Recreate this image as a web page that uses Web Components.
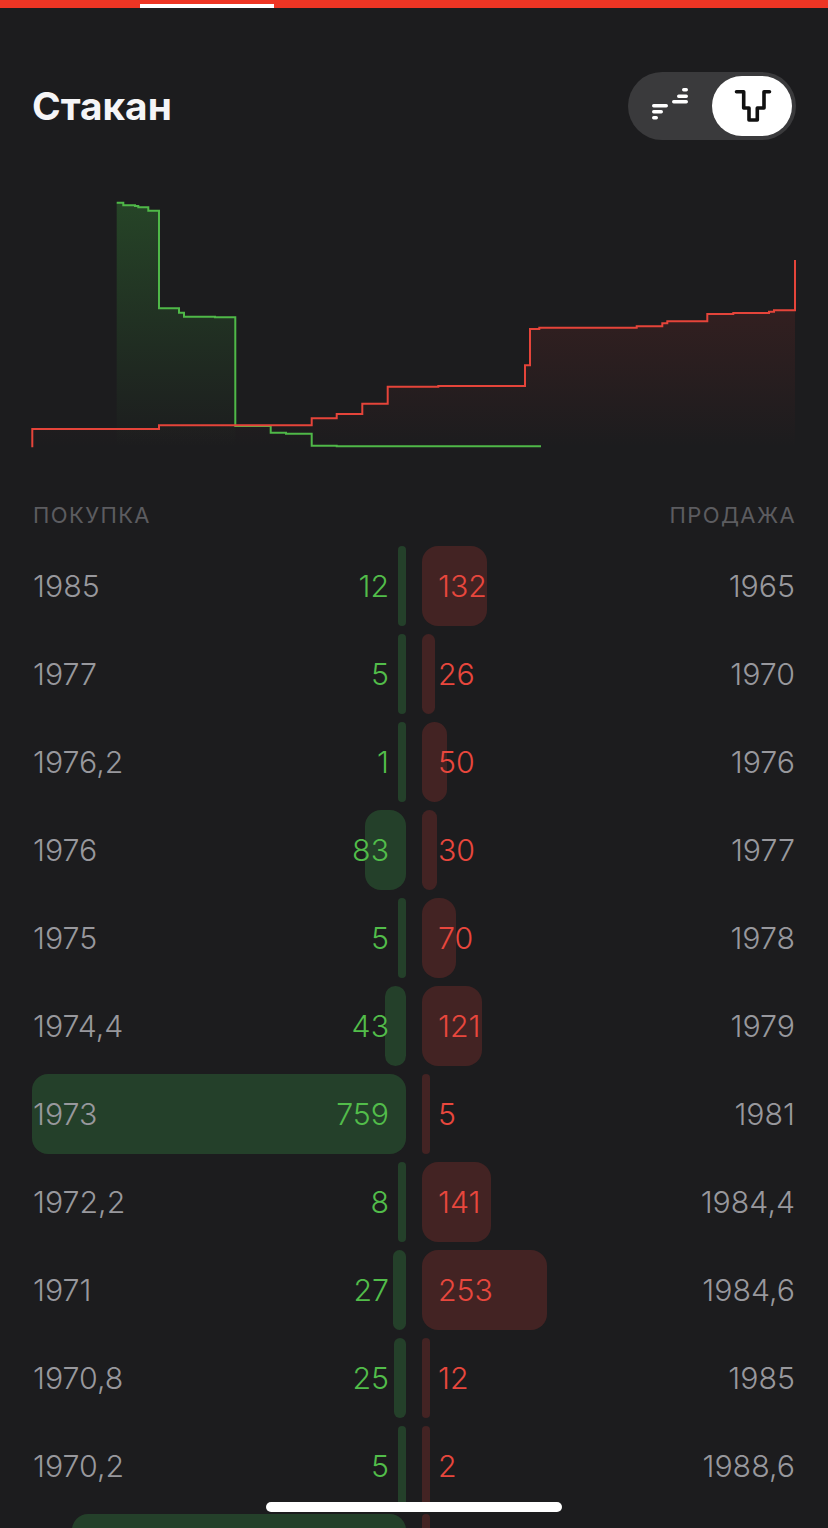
<!DOCTYPE html>
<html lang="ru"><head><meta charset="utf-8"><title>Стакан</title>
<style>
html,body{margin:0;height:1528px;overflow:hidden;background:#1c1c1e;font-family:Inter,"Noto Sans",sans-serif}
</style></head><body>
<order-screen>
  <top-bar></top-bar>
  <book-header>Стакан</book-header>
  <depth-chart></depth-chart>
  <book-labels></book-labels>
  <book-row bp="1985" bq="12" bw="8" ap="1965" aq="132" aw="65"></book-row>
  <book-row bp="1977" bq="5" bw="8" ap="1970" aq="26" aw="13"></book-row>
  <book-row bp="1976,2" bq="1" bw="8" ap="1976" aq="50" aw="25"></book-row>
  <book-row bp="1976" bq="83" bw="41" ap="1977" aq="30" aw="15"></book-row>
  <book-row bp="1975" bq="5" bw="8" ap="1978" aq="70" aw="34"></book-row>
  <book-row bp="1974,4" bq="43" bw="21" ap="1979" aq="121" aw="60"></book-row>
  <book-row bp="1973" bq="759" bw="374" ap="1981" aq="5" aw="8"></book-row>
  <book-row bp="1972,2" bq="8" bw="8" ap="1984,4" aq="141" aw="69"></book-row>
  <book-row bp="1971" bq="27" bw="13" ap="1984,6" aq="253" aw="125"></book-row>
  <book-row bp="1970,8" bq="25" bw="12" ap="1985" aq="12" aw="8"></book-row>
  <book-row bp="1970,2" bq="5" bw="8" ap="1988,6" aq="2" aw="8"></book-row>
  <book-row bw="334" aw="8"></book-row>
  <home-indicator></home-indicator>
</order-screen>
<script>
function def(name,html){
  customElements.define(name,class extends HTMLElement{
    constructor(){super();this.attachShadow({mode:'open'});}
    connectedCallback(){this.shadowRoot.innerHTML=typeof html==='function'?html(this):html;}
  });
}
def('order-screen',`<style>:host{display:flex;flex-direction:column;width:828px;height:1528px;overflow:hidden;position:relative;background:#1c1c1e}::slotted(*){flex:none}</style><slot></slot>`);
def('top-bar',`<style>:host{display:flex;align-items:flex-end;height:8px;background:#ee3524;padding-left:140px;box-sizing:border-box}
i{display:block;width:134px;height:4px;background:#fff}</style><i></i>`);
def('book-header',`<style>
:host{display:flex;justify-content:space-between;align-items:center;height:68px;margin-top:64px;padding:0 32px;box-sizing:border-box}
h1{margin:0;font:700 38.800px/44px Inter,sans-serif;color:#f5f5f7}
.t{display:flex;align-items:center;width:168px;height:68px;border-radius:34px;background:#3a3a3c;padding:4px;box-sizing:border-box;justify-content:space-between}
.a{width:80px;height:60px;display:flex;align-items:center;justify-content:center}
.b{background:#fff;border-radius:30px}
svg{display:block}
</style><h1><slot></slot></h1>
<div class="t"><div class="a"><svg width="44" height="40" viewBox="0 0 44 40" fill="none" stroke="#fff" stroke-width="3.4" stroke-linecap="round" style="margin-left:-2px;margin-top:-2px">
<path d="M4.700 20.800H17.300M4.700 26.700H12.300M4.700 32.700H7.300"/><path d="M34.700 4.800H37.300M29.700 11.200H37.300M24.700 16.800H37.300"/></svg></div>
<div class="b a"><svg width="44" height="36" viewBox="0 0 44 36" fill="none" stroke="#111" stroke-width="3.6" stroke-linecap="round" stroke-linejoin="round"><path d="M6.500 3.700H13.700V20H19V32H27.300V20H34V3.700H39.500"/></svg></div></div>`);
def('depth-chart',`<style>:host{display:block;height:270px;margin-top:50px}svg{display:block}</style>
<svg width="828" height="270" viewBox="0 190 828 270" fill="none">
<defs>
<linearGradient id="g" x1="0" y1="203" x2="0" y2="447" gradientUnits="userSpaceOnUse"><stop offset="0" stop-color="#2b5a2c" stop-opacity=".65"/><stop offset="1" stop-color="#2b5a2c" stop-opacity="0"/></linearGradient>
<linearGradient id="r" x1="0" y1="290" x2="0" y2="447" gradientUnits="userSpaceOnUse"><stop offset="0" stop-color="#5c2524" stop-opacity=".4"/><stop offset="1" stop-color="#5c2524" stop-opacity="0"/></linearGradient>
</defs>
<path fill="url(#g)" d="M116.700 447V202.700H123.300V205.300H135V206H138.300V207.300H148.300V210.700H159V308.300H179V309.300H179V312.700H184V316.700H215V317.300H235.300V447Z"/>
<path fill="url(#r)" d="M32.300 447.300V429H159V425.300H311.700V418.300H336.700V414H362.300V403.700H387.700V386.700H438.300V386H525V365.300H530V329H539.300V327.700H636.700V326.300H662.300V323.300H667.300V321.300H707.300V314H733.300V313H769V311.700H774V310.300H795V447.300Z"/>
<path stroke="#4fb848" stroke-width="2" d="M116.700 202.700H123.300V205.300H135V206H138.300V207.300H148.300V210.700H159V308.300H179V312.700H184V316.700H215V317.300H235.300V426H270.700V432.700H286V433.700H311.700V445.700H336.700V446.300H541"/>
<path stroke="#e5443a" stroke-width="2" d="M32.300 447.300V429H159V425.300H311.700V418.300H336.700V414H362.300V403.700H387.700V386.700H438.300V386H525V365.300H530V329H539.300V327.700H636.700V326.300H662.300V323.300H667.300V321.300H707.300V314H733.300V313H769V311.700H774V310.300H795V260"/>
</svg>`);
def('book-labels',`<style>:host{display:flex;justify-content:space-between;height:30px;margin:40px 0 16px;padding:0 32px 0 33px;align-items:center;font:400 22px/30px Inter,sans-serif;letter-spacing:1.400px;color:#5c5c60}</style><span>ПОКУПКА</span><span>ПРОДАЖА</span>`);
def('book-row',el=>{
  const g=n=>el.getAttribute(n)||'';
  return `<style>
:host{display:grid;grid-template-columns:374px 374px;column-gap:16px;height:80px;margin:0 32px 8px;font:300 30.300px/80px Inter,sans-serif;color:#98989d}
.c{display:grid;grid-template-columns:1fr auto;align-items:center}
.c>*{grid-row:1}
.bar{grid-column:1/3;height:80px;border-radius:16px}
.buy .bar{justify-self:end;background:#24402a}
.sell .bar{justify-self:start;background:#432323}
.buy .p{grid-column:1;padding-left:1px}.buy .q{grid-column:2;color:#52bd4a;padding-right:17px}
.sell .q{grid-column:1;color:#e8473d;padding-left:16px}.sell .p{grid-column:2;padding-right:1px}
</style>
<div class="c buy"><div class="bar" style="width:${g('bw')}px;${+g('bw')<12?'border-radius:4px':''}"></div><span class="p">${g('bp')}</span><span class="q">${g('bq')}</span></div>
<div class="c sell"><div class="bar" style="width:${g('aw')}px;${+g('aw')<12?'border-radius:4px':''}"></div><span class="q">${g('aq')}</span><span class="p">${g('ap')}</span></div>`;
});
def('home-indicator',`<style>:host{position:absolute;left:266px;top:1502px;width:296px;height:10px;border-radius:5px;background:#fff}</style>`);
</script>
</body></html>
